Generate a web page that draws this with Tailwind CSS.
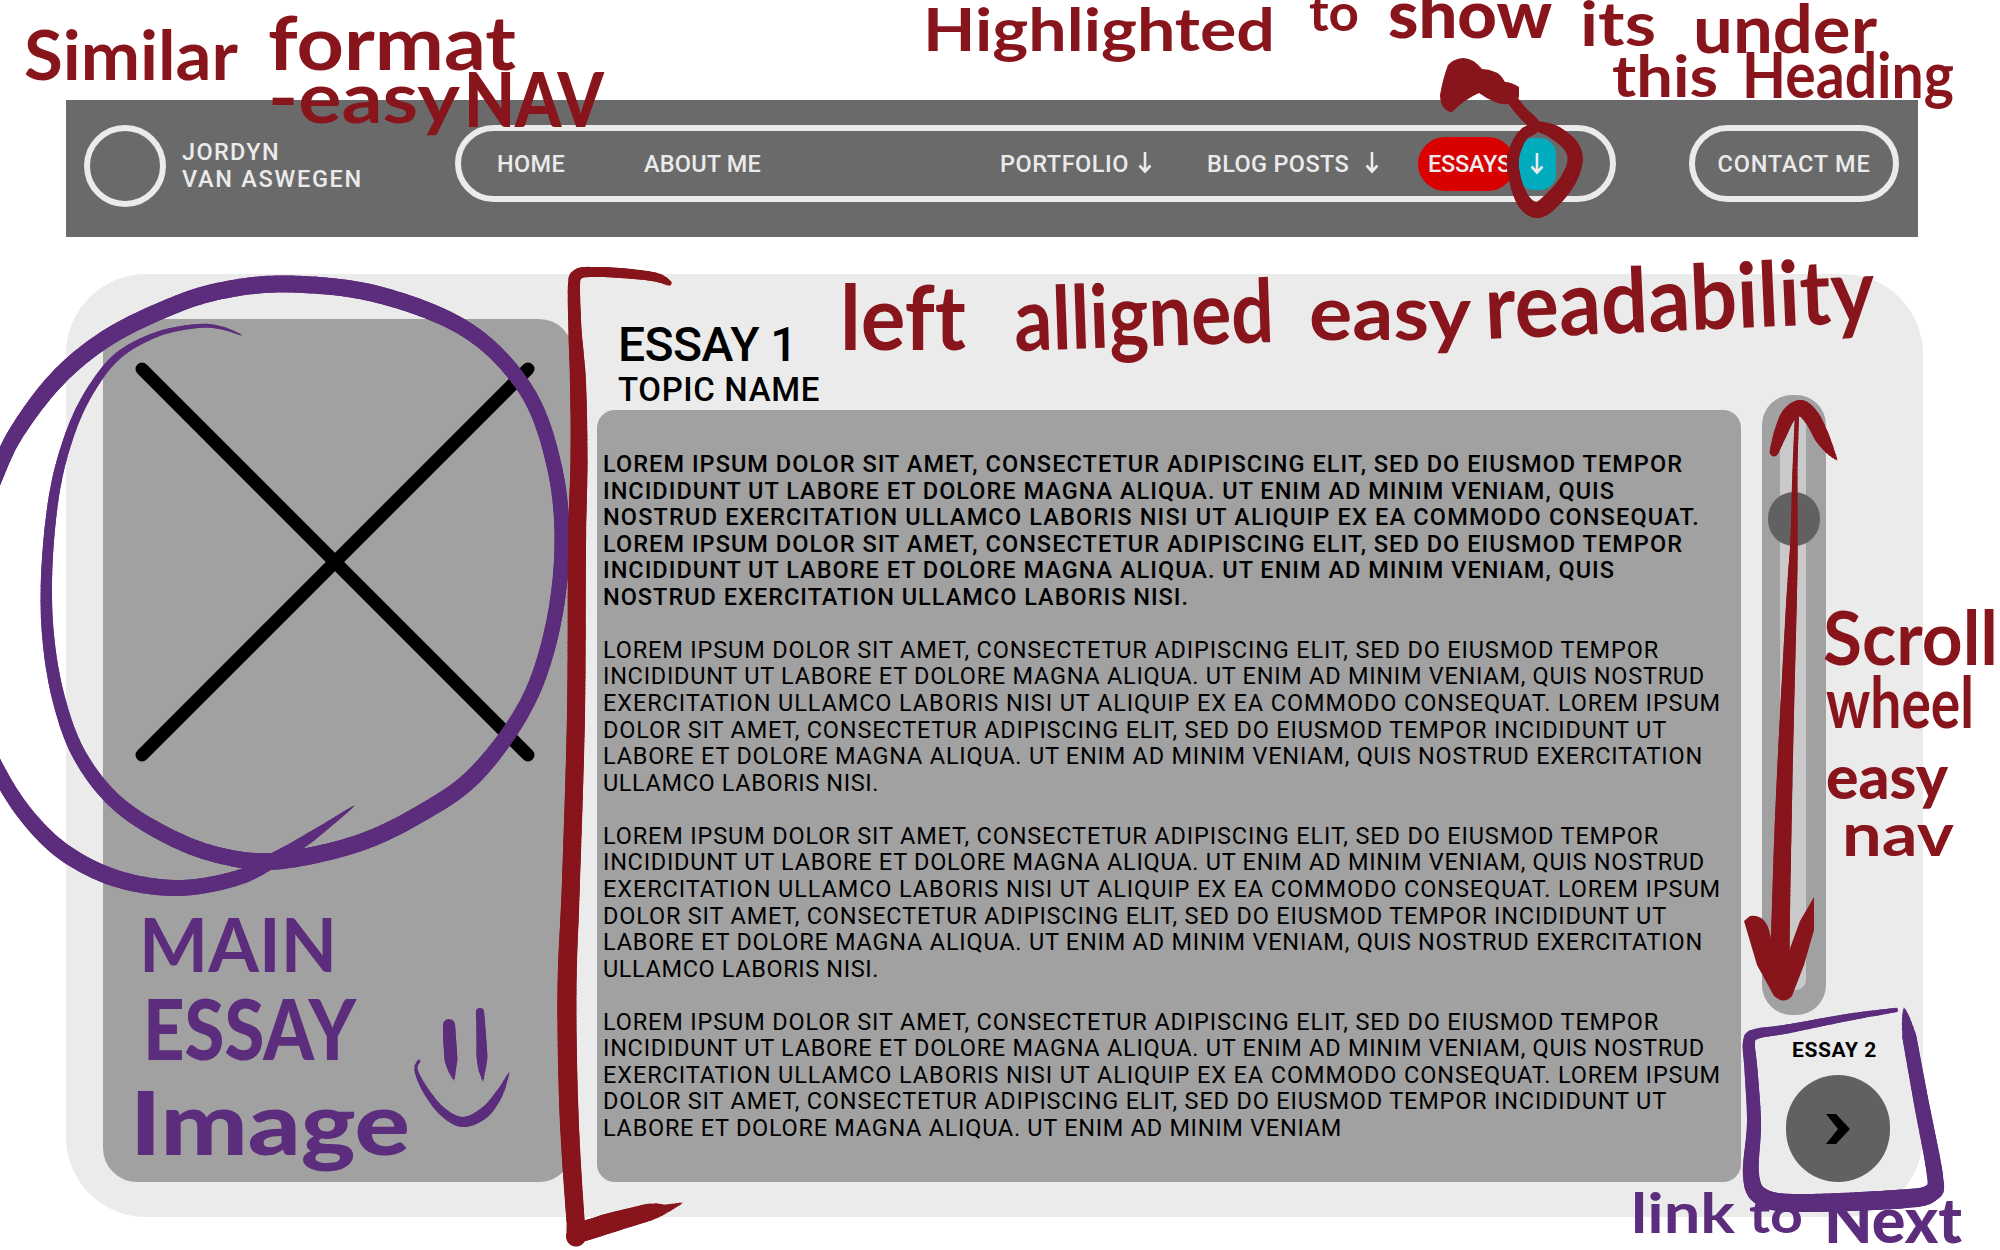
<!DOCTYPE html>
<html lang="en">
<head>
<meta charset="utf-8">
<title>Essay page wireframe</title>
<script src="https://cdn.jsdelivr.net/npm/@tailwindcss/browser@4"></script>
</head>
<body class="bg-white">
<div id="page" class="relative w-[2000px] h-[1250px] overflow-hidden bg-white pt-[100px] pl-[66px] font-['Roboto','Liberation_Sans',sans-serif]">

  <!-- Navigation bar -->
  <header class="flex w-[1852px] h-[137px] bg-[#6a6a6a] pt-[25px] pl-[18px] text-[#ebebeb] text-[23.5px] leading-[27px] font-medium whitespace-nowrap">
    <div class="w-[82px] h-[82px] shrink-0 rounded-full border-[6px] border-[#ebebeb]"></div>
    <div class="ml-[16px] w-[273px] shrink-0 pt-[14px]">
      <div><span data-w="98">JORDYN</span></div>
      <div><span data-w="181">VAN ASWEGEN</span></div>
    </div>
    <nav class="flex items-center w-[1161px] h-[77px] shrink-0 rounded-full border-[6px] border-[#ebebeb] pl-[36px]">
      <div class="w-[147px] shrink-0 pt-[2px]"><span data-w="68">HOME</span></div>
      <div class="w-[356px] shrink-0 pt-[2px]"><span data-w="117">ABOUT ME</span></div>
      <div class="flex w-[207px] shrink-0 pt-[2px]"><span class="w-[138px]"><span data-w="129">PORTFOLIO</span></span>
        <svg class="w-[14px] h-[24px]" viewBox="0 0 14 24" fill="none" stroke="#ebebeb" stroke-width="2.6"><path d="M7 1V20M1.500 14.500L7 20.500L12.500 14.500"/></svg></div>
      <div class="flex w-[211px] shrink-0 pt-[2px]"><span class="w-[158px]"><span data-w="142">BLOG POSTS</span></span>
        <svg class="w-[14px] h-[24px]" viewBox="0 0 14 24" fill="none" stroke="#ebebeb" stroke-width="2.6"><path d="M7 1V20M1.500 14.500L7 20.500L12.500 14.500"/></svg></div>
      <div class="flex items-center w-[97px] h-[54px] shrink-0 rounded-full bg-[#d90000] pl-[10px] pt-[2px]"><span data-w="83">ESSAYS</span></div>
      <div class="flex items-center justify-center w-[38px] h-[52px] ml-[3px] shrink-0 rounded-[16px] bg-[#00acbe]">
        <svg class="w-[14px] h-[24px]" viewBox="0 0 14 24" fill="none" stroke="#ebebeb" stroke-width="2.6"><path d="M7 1V20M1.500 14.500L7 20.500L12.500 14.500"/></svg></div>
    </nav>
    <div class="flex items-center justify-center w-[210px] h-[77px] ml-[73px] pt-[2px] shrink-0 rounded-full border-[6px] border-[#ebebeb]"><span data-w="153">CONTACT ME</span></div>
  </header>

  <!-- Essay card -->
  <main class="flex w-[1857px] h-[943px] mt-[37px] rounded-[80px] bg-[#ebebeb] pl-[37px] text-black">
    <div class="w-[470px] h-[863px] mt-[45px] shrink-0 rounded-[34px] bg-[#a1a1a1] pt-[43px] pl-[32px]">
      <svg class="w-[400px] h-[400px]" viewBox="0 0 400 400" stroke="#000" stroke-width="13" stroke-linecap="round"><path d="M7 7L393 393M393 7L7 393"/></svg>
    </div>
    <section class="w-[1144px] ml-[24px] shrink-0 whitespace-nowrap">
      <div class="h-[136px] pt-[46px] pl-[21px]">
        <h1 class="text-[48px] leading-[50px] font-medium"><span data-w="179">ESSAY 1</span></h1>
        <h2 class="text-[33px] leading-[39px] font-medium"><span data-w="202">TOPIC NAME</span></h2>
      </div>
      <div class="h-[772px] rounded-[18px] bg-[#a1a1a1] pt-[41px] pl-[6px] text-[23.5px] leading-[26.56px]">
        <div class="font-medium mb-[26.56px]">
          <div><span data-w="1080">LOREM IPSUM DOLOR SIT AMET, CONSECTETUR ADIPISCING ELIT, SED DO EIUSMOD TEMPOR</span></div>
          <div><span data-w="1012">INCIDIDUNT UT LABORE ET DOLORE MAGNA ALIQUA. UT ENIM AD MINIM VENIAM, QUIS</span></div>
          <div><span data-w="1097">NOSTRUD EXERCITATION ULLAMCO LABORIS NISI UT ALIQUIP EX EA COMMODO CONSEQUAT.</span></div>
          <div><span data-w="1080">LOREM IPSUM DOLOR SIT AMET, CONSECTETUR ADIPISCING ELIT, SED DO EIUSMOD TEMPOR</span></div>
          <div><span data-w="1012">INCIDIDUNT UT LABORE ET DOLORE MAGNA ALIQUA. UT ENIM AD MINIM VENIAM, QUIS</span></div>
          <div><span data-w="586">NOSTRUD EXERCITATION ULLAMCO LABORIS NISI.</span></div>
        </div>
        <div class="mb-[26.56px]">
          <div><span data-w="1056">LOREM IPSUM DOLOR SIT AMET, CONSECTETUR ADIPISCING ELIT, SED DO EIUSMOD TEMPOR</span></div>
          <div><span data-w="1102">INCIDIDUNT UT LABORE ET DOLORE MAGNA ALIQUA. UT ENIM AD MINIM VENIAM, QUIS NOSTRUD</span></div>
          <div><span data-w="1118">EXERCITATION ULLAMCO LABORIS NISI UT ALIQUIP EX EA COMMODO CONSEQUAT. LOREM IPSUM</span></div>
          <div><span data-w="1064">DOLOR SIT AMET, CONSECTETUR ADIPISCING ELIT, SED DO EIUSMOD TEMPOR INCIDIDUNT UT</span></div>
          <div><span data-w="1100">LABORE ET DOLORE MAGNA ALIQUA. UT ENIM AD MINIM VENIAM, QUIS NOSTRUD EXERCITATION</span></div>
          <div><span data-w="276">ULLAMCO LABORIS NISI.</span></div>
        </div>
        <div class="mb-[26.56px]">
          <div><span data-w="1056">LOREM IPSUM DOLOR SIT AMET, CONSECTETUR ADIPISCING ELIT, SED DO EIUSMOD TEMPOR</span></div>
          <div><span data-w="1102">INCIDIDUNT UT LABORE ET DOLORE MAGNA ALIQUA. UT ENIM AD MINIM VENIAM, QUIS NOSTRUD</span></div>
          <div><span data-w="1118">EXERCITATION ULLAMCO LABORIS NISI UT ALIQUIP EX EA COMMODO CONSEQUAT. LOREM IPSUM</span></div>
          <div><span data-w="1064">DOLOR SIT AMET, CONSECTETUR ADIPISCING ELIT, SED DO EIUSMOD TEMPOR INCIDIDUNT UT</span></div>
          <div><span data-w="1100">LABORE ET DOLORE MAGNA ALIQUA. UT ENIM AD MINIM VENIAM, QUIS NOSTRUD EXERCITATION</span></div>
          <div><span data-w="276">ULLAMCO LABORIS NISI.</span></div>
        </div>
        <div>
          <div><span data-w="1056">LOREM IPSUM DOLOR SIT AMET, CONSECTETUR ADIPISCING ELIT, SED DO EIUSMOD TEMPOR</span></div>
          <div><span data-w="1102">INCIDIDUNT UT LABORE ET DOLORE MAGNA ALIQUA. UT ENIM AD MINIM VENIAM, QUIS NOSTRUD</span></div>
          <div><span data-w="1118">EXERCITATION ULLAMCO LABORIS NISI UT ALIQUIP EX EA COMMODO CONSEQUAT. LOREM IPSUM</span></div>
          <div><span data-w="1064">DOLOR SIT AMET, CONSECTETUR ADIPISCING ELIT, SED DO EIUSMOD TEMPOR INCIDIDUNT UT</span></div>
          <div><span data-w="739">LABORE ET DOLORE MAGNA ALIQUA. UT ENIM AD MINIM VENIAM</span></div>
        </div>
      </div>
    </section>
    <aside class="w-[130px] ml-[21px] pt-[121px] shrink-0 whitespace-nowrap">
      <div class="relative w-[64px] h-[620px] rounded-[30px] bg-[#a1a1a1] pt-[20px] pl-[18px]">
        <div class="w-[26px] h-[575px] rounded-[10px] bg-[#c9c9c9]"></div>
        <div class="absolute left-[6px] top-[97px] w-[52px] h-[54px] rounded-full bg-[#616161]"></div>
      </div>
      <div class="ml-[30px] mt-[22px] text-[21px] leading-[26px] font-bold"><span data-w="85">ESSAY 2</span></div>
      <div class="flex items-center justify-center w-[104px] h-[107px] ml-[24px] mt-[12px] rounded-full bg-[#616161]">
        <svg class="w-[24px] h-[30px]" viewBox="0 0 24 30"><path d="M0 0H10L24 15L10 30H0L12 15Z"/></svg>
      </div>
    </aside>
  </main>

  <!-- Marker annotations over the wireframe -->
  <svg id="ink" class="absolute left-0 top-0 w-[2000px] h-[1250px] font-['Lato','Open_Sans',sans-serif] font-bold [font-variant-ligatures:none]" viewBox="0 0 2000 1250">
    <g id="strokes"></g>
    <g fill="#88141c">
      <path d="M1463 58Q1453 59 1448 65Q1443 78 1440 95Q1440 102 1443 107Q1447 112 1452 112Q1465 99 1479 93Q1487 99 1495 102Q1502 105 1508 104Q1516 102 1519 97V87Q1511 82 1505 82Q1500 73 1495 72Q1489 69 1482 69Q1473 58 1463 58Z"/>
      <path d="M1744 921L1750 916Q1764 914 1769 930L1771 938L1789 951L1800 921L1814 897V930L1804 965L1792 996Q1784 1005 1774 996L1757 965Z"/>
      <text x="24" y="80" font-size="68" textLength="214" lengthAdjust="spacingAndGlyphs">Similar</text>
      <text x="268" y="70" font-size="74" textLength="248" lengthAdjust="spacingAndGlyphs">format</text>
      <text x="268" y="123" font-size="70" textLength="192" lengthAdjust="spacingAndGlyphs">-easy</text>
      <text x="464" y="127" font-size="76" class="font-black" textLength="140" lengthAdjust="spacingAndGlyphs">NAV</text>
      <text x="923" y="51" font-size="60" textLength="352" lengthAdjust="spacingAndGlyphs">Highlighted</text>
      <text x="1309" y="31" font-size="52" textLength="50" lengthAdjust="spacingAndGlyphs">to</text>
      <text x="1388" y="38" font-size="66" class="font-black" textLength="164" lengthAdjust="spacingAndGlyphs">show</text>
      <text x="1580" y="46" font-size="62" textLength="76" lengthAdjust="spacingAndGlyphs">its</text>
      <text x="1693" y="53" font-size="66" textLength="184" lengthAdjust="spacingAndGlyphs">under</text>
      <text x="1612" y="97" font-size="58" textLength="106" lengthAdjust="spacingAndGlyphs">this</text>
      <text x="1742" y="98" font-size="64" textLength="212" lengthAdjust="spacingAndGlyphs">Heading</text>
      <text x="840" y="350" font-size="90" textLength="126" lengthAdjust="spacingAndGlyphs">left</text>
      <text x="1015" y="351" font-size="88" textLength="260" lengthAdjust="spacingAndGlyphs" transform="rotate(-2 1015 351)">alligned</text>
      <text x="1309" y="340" font-size="76" textLength="162" lengthAdjust="spacingAndGlyphs">easy</text>
      <text x="1486" y="339" font-size="90" textLength="390" lengthAdjust="spacingAndGlyphs" transform="rotate(-2.500 1486 339)">readability</text>
      <text x="1823" y="665" font-size="74" textLength="175" lengthAdjust="spacingAndGlyphs">Scroll</text>
      <text x="1826" y="728" font-size="70" textLength="148" lengthAdjust="spacingAndGlyphs">wheel</text>
      <text x="1826" y="799" font-size="60" class="font-black" textLength="122" lengthAdjust="spacingAndGlyphs">easy</text>
      <text x="1842" y="856" font-size="60" textLength="112" lengthAdjust="spacingAndGlyphs">nav</text>
    </g>
    <g fill="#5c2d7c">
      <text x="139" y="972" font-size="74" textLength="198" lengthAdjust="spacingAndGlyphs">MAIN</text>
      <text x="143" y="1060" font-size="84" class="font-black" textLength="213" lengthAdjust="spacingAndGlyphs">ESSAY</text>
      <text x="130" y="1155" font-size="88" class="font-black" textLength="280" lengthAdjust="spacingAndGlyphs">Image</text>
      <text x="1631" y="1233" font-size="56" textLength="104" lengthAdjust="spacingAndGlyphs">link</text>
      <text x="1749" y="1233" font-size="50" textLength="54" lengthAdjust="spacingAndGlyphs">to</text>
      <text x="1824" y="1243" font-size="62" class="font-black" textLength="138" lengthAdjust="spacingAndGlyphs">Next</text>
    </g>
  </svg>
</div>
<script>
  function fit() {
    document.querySelectorAll('[data-w]').forEach(function (el) {
      el.style.letterSpacing = '0px';
      el.style.letterSpacing = (el.dataset.w - el.getBoundingClientRect().width) / el.textContent.length + 'px';
    });
  }
  fit();
  window.addEventListener('load', fit);
  document.fonts.ready.then(fit);
  new ResizeObserver(fit).observe(document.getElementById('page'));
  setTimeout(fit, 60);

  // Marker strokes: lists of [x, y, width], smoothed with a Catmull-Rom spline.
  var RED = '#88141c', PURPLE = '#5c2d7c';
  var marks = [
    [PURPLE, [[241,335,1],[222,328,3],[198,326,4],[158,334,5],[119,355,7],[92,388,8],[71,431,9],[55,490,10],[47,566,11],[48,635,12],[59,700,13],[80,756,14],[117,803,15],[170,837,16],[222,856,16],[277,861,17],[356,844,17],[420,814,17],[476,774,17],[526,705,15],[552,630,15],[562,545,15],[554,465,15],[526,390,15],[467,330,16],[376,294,17],[285,284,17],[215,292,17],[158,312,17],[104,340,17],[59,377,17],[22,424,16],[0,466,15],[-25,540,15],[-30,640,15],[-18,730,15],[3,780,15],[32,822,16],[68,855,17],[118,879,17],[178,888,16],[237,878,15],[277,858,14],[312,836,10],[354,806,1]]],
    [RED, [[669,283,4],[655,277,9],[620,273,10],[588,272,10],[577,275,11],[574,285,12],[575,330,13],[578,383,16],[579,460,17],[577,545,18],[576,713,18],[571,881,18],[567,990,19],[569,1113,19],[576,1226,18],[579,1232,20],[610,1223,20],[650,1212,17],[665,1209,9],[682,1203,1]]],
    [RED, [[1511,98,11],[1521,111,11],[1534,126,12],[1522,136,11],[1513,158,12],[1516,183,12],[1525,203,14],[1538,210,16],[1552,200,17],[1567,182,16],[1575,162,15],[1571,146,15],[1554,132,14],[1537,126,10]]],
    [RED, [[1774,452,8],[1781,432,13],[1789,415,15],[1801,408,16],[1812,418,16],[1822,437,15],[1829,449,10],[1837,460,1]]],
    [RED, [[1797,415,4],[1795,470,5],[1794,540,7],[1792,590,10],[1787,714,14],[1783,830,17],[1780,950,19]]],
    [PURPLE, [[1896,1010,4],[1850,1017,7],[1787,1029,9],[1756,1034,10],[1749,1042,12],[1751,1070,13],[1754,1123,14],[1751,1175,16],[1762,1197,18],[1800,1203,18],[1901,1199,19],[1931,1193,18],[1935,1176,16],[1921,1101,15],[1909,1035,14],[1904,1008,1]]],
    [PURPLE, [[449,1025,12],[450,1045,13],[451,1060,13],[452,1070,8],[454,1080,1]]],
    [PURPLE, [[480,1012,8],[481,1030,9],[482,1058,11],[482,1070,7],[483,1081,1]]],
    [PURPLE, [[419,1061,3],[416,1070,3],[426,1091,6],[443,1112,8],[463,1122,10],[484,1113,11],[499,1094,8],[509,1073,1]]]
  ];
  var out = '';
  marks.forEach(function (m) {
    var p = m[1];
    for (var i = 0; i < p.length - 1; i++) {
      var a = p[Math.max(i - 1, 0)], b = p[i], c = p[i + 1], d = p[Math.min(i + 2, p.length - 1)];
      var n = Math.max(2, Math.ceil(Math.hypot(c[0] - b[0], c[1] - b[1]) / 4)), prev = b;
      for (var k = 1; k <= n; k++) {
        var t = k / n, q = [0, 1].map(function (j) {
          return 0.5 * (2 * b[j] + (c[j] - a[j]) * t + (2 * a[j] - 5 * b[j] + 4 * c[j] - d[j]) * t * t + (3 * b[j] - a[j] - 3 * c[j] + d[j]) * t * t * t);
        });
        q.push(b[2] + (c[2] - b[2]) * t);
        out += '<path d="M' + prev[0].toFixed(1) + ' ' + prev[1].toFixed(1) + 'L' + q[0].toFixed(1) + ' ' + q[1].toFixed(1) + '" stroke="' + m[0] + '" stroke-width="' + q[2].toFixed(1) + '" stroke-linecap="round"/>';
        prev = q;
      }
    }
  });
  document.getElementById('strokes').innerHTML = out;
</script>
</body>
</html>
